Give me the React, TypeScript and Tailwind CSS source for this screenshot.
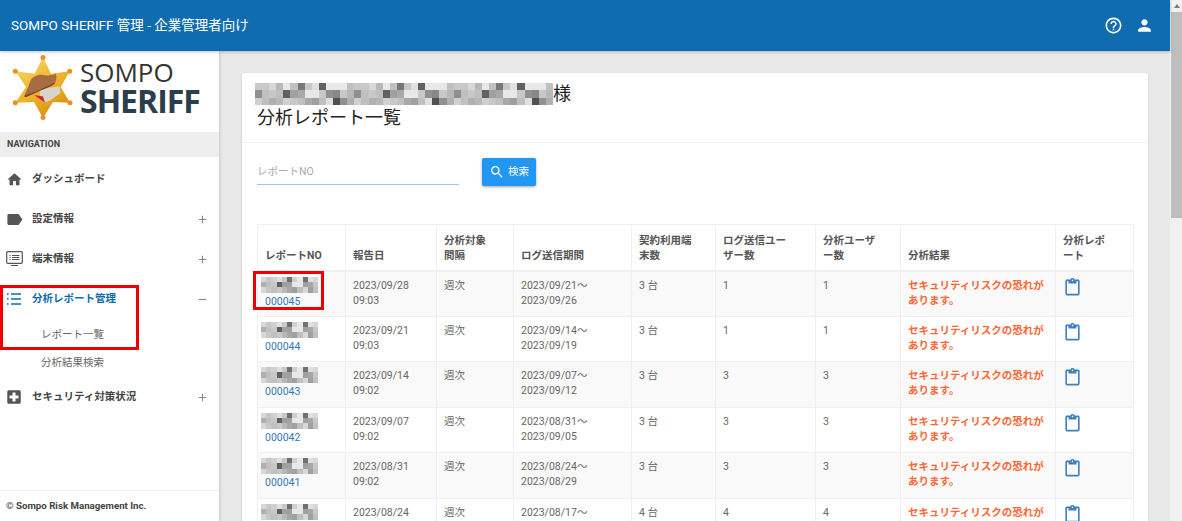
import { MdAdd, MdContentPaste, MdHelpOutline, MdHome, MdLabel, MdLocalHospital, MdPerson, MdRemove, MdSearch } from 'react-icons/md';

// grey values of the redacted name blocks, read off the picture
const nameCells = [
  ['c8', 'c8', 'd8', 'b8', 'e8', 'c0', '78', 'c8', 'e0', '60', 'e8', 'e8', 'e8', 'c0'],
  ['90', 'c0', 'c8', 'c0', '60', 'a0', 'a8', 'e8', 'e8', 'c8', '90', '88', 'c8', 'b8'],
  ['d0', 'c0', 'b0', 'b8', 'd0', 'c8', 'c0', 'a8', 'a0', 'c0', 'e0', '50', '90', 'b0'],
];
const rowCells = [
  ['d8', 'c8', 'd0', 'e0', 'c8', '70', 'd0', 'e8', '70', 'e0', 'd8'],
  ['b0', 'c0', 'c8', '60', 'a0', 'a0', 'e8', 'e8', 'a0', 'a8', 'c8'],
  ['d8', 'c8', 'c0', 'c8', 'b8', 'a8', 'a0', 'c0', 'd8', 'a0', 'c0'],
];

const Mosaic = ({ cells, repeat = 1, w, h }: { cells: string[][]; repeat?: number; w: number; h: number }) => (
  <div className="grid shrink-0 blur-[0.5px]" style={{ gridTemplateColumns: `repeat(${cells[0].length * repeat}, ${w}px)`, gridAutoRows: `${h}px` }}>
    {cells.flatMap((row, r) =>
      Array.from({ length: repeat }).flatMap((_, n) =>
        row.map((v, c) => <div key={`${r}-${n}-${c}`} style={{ background: `#${v}${v}${v}` }} />),
      ),
    )}
  </div>
);

const NavItem = ({ icon, label, toggle, active }: { icon: React.ReactNode; label: string; toggle?: 'plus' | 'minus'; active?: boolean }) => (
  <div className={`flex h-[40px] items-center pl-[1px] pr-[10px] text-[10.5px] font-bold ${active ? 'text-[#0f6cb0]' : 'text-[#444]'}`}>
    <div className="flex w-[26px] justify-center">{icon}</div>
    <span className="ml-[5px] flex-1">{label}</span>
    {toggle === 'plus' && <MdAdd className="text-[13px] text-[#888]" />}
    {toggle === 'minus' && <MdRemove className="text-[13px] text-[#888]" />}
  </div>
);

const ScreenIcon = () => (
  <svg width="17" height="16" viewBox="0 0 17 16" fill="none" stroke="#555" strokeWidth="1.2">
    <rect x="0.7" y="0.7" width="15.6" height="11.6" rx="1" />
    <path d="M3.5 4.5h1M6 4.5h7.5M3.5 6.5h1M6 6.5h7.5M3.5 8.5h1M6 8.5h7.5M5 14.5h7" />
  </svg>
);

const ListIcon = () => (
  <svg width="14" height="12" viewBox="0 0 14 12" fill="none" stroke="#0f6cb0" strokeWidth="1.4">
    <path d="M0 1h1.6M4 1h10M0 6h1.6M4 6h10M0 11h1.6M4 11h10" />
  </svg>
);

const StarLogo = () => (
  <svg width="64" height="68" viewBox="0 0 64 68">
    <defs>
      <linearGradient id="gold" x1="0" y1="0" x2="0.6" y2="1">
        <stop offset="0" stopColor="#f8dc68" />
        <stop offset="0.6" stopColor="#eeb22c" />
        <stop offset="1" stopColor="#dc9212" />
      </linearGradient>
    </defs>
    <path d="M32 2 40 18.7 58.7 16.3 49.7 32 59 47.7 42 47 32 63 23 47 4.3 47.7 15 32 4.3 16.3 23.7 18.7Z" fill="url(#gold)" />
    <g fill="#e8921a">
      <circle cx="32" cy="2.5" r="2.5" /><circle cx="58.7" cy="16.3" r="2.5" /><circle cx="59" cy="47.7" r="2.5" />
      <circle cx="32" cy="62.5" r="2.5" /><circle cx="4.3" cy="47.7" r="2.5" /><circle cx="4.3" cy="16.3" r="2.5" />
    </g>
    <path d="M29 34 48.7 31.5 49.5 38 39 45.5 33.7 47.5 29 41Z" fill="#d8d4ca" />
    <path d="M23 40 32 41.5 34 47.5Z" fill="#c2272d" />
    <path d="M19.7 25.3C22 21 27 19.7 30 19.7 33 19.5 36 21 38.7 20.3 41 20 43 19.5 45 18.7 46 23 45 26 43.7 28.7 39 32 34 33.5 30 35.3 25 37.5 20 40 15 42 13 42.5 13 41 14 39 16 35 18 30 19.7 25.3Z" fill="#a66d40" />
    <path d="M14 40.5C22 38 34 33 43.7 27.5L43.7 28.7C39 32 34 33.5 30 35.3 25 37.5 20 40 15 42 13.5 42.5 13.5 41.5 14 40.5Z" fill="#754624" />
  </svg>
);

const reports = [
  { no: '000045', date: '2023/09/28', time: '09:03', from: '2023/09/21', to: '2023/09/26', terminals: '3 台', log: '1', users: '1' },
  { no: '000044', date: '2023/09/21', time: '09:03', from: '2023/09/14', to: '2023/09/19', terminals: '3 台', log: '1', users: '1' },
  { no: '000043', date: '2023/09/14', time: '09:02', from: '2023/09/07', to: '2023/09/12', terminals: '3 台', log: '3', users: '3' },
  { no: '000042', date: '2023/09/07', time: '09:02', from: '2023/08/31', to: '2023/09/05', terminals: '3 台', log: '3', users: '3' },
  { no: '000041', date: '2023/08/31', time: '09:02', from: '2023/08/24', to: '2023/08/29', terminals: '3 台', log: '3', users: '3' },
  { no: '000040', date: '2023/08/24', time: '09:02', from: '2023/08/17', to: '2023/08/22', terminals: '4 台', log: '4', users: '4' },
];

const headers = [
  ['レポートNO'],
  ['報告日'],
  ['分析対象', '間隔'],
  ['ログ送信期間'],
  ['契約利用端', '末数'],
  ['ログ送信ユー', 'ザー数'],
  ['分析ユーザ', 'ー数'],
  ['分析結果'],
  ['分析レポ', 'ート'],
];
const colWidths = ['w-[88px]', 'w-[91px]', 'w-[77px]', 'w-[118px]', 'w-[84px]', 'w-[100px]', 'w-[85px]', 'w-[155px]', 'w-[78px]'];

export default function App() {
  return (
    <div className="relative flex h-[521px] w-[1182px] overflow-hidden bg-[#e9e9e9] font-['Roboto','Noto_Sans_CJK_JP',sans-serif] text-[10.5px] text-[#666]">
      <div className="flex min-w-0 flex-1 flex-col">
        <header className="z-10 flex h-[51px] shrink-0 items-center justify-between bg-[#0f6cb0] pl-[11px] pr-[16px] text-white shadow-[0_1px_3px_rgba(0,0,0,0.25)]">
          <div className="text-[13.5px]">SOMPO SHERIFF 管理 - 企業管理者向け</div>
          <div className="flex items-center gap-[12px]">
            <MdHelpOutline className="text-[19px]" />
            <MdPerson className="text-[19px]" />
          </div>
        </header>

        <div className="flex min-h-0 flex-1">
          <aside className="flex w-[219px] shrink-0 flex-col bg-white shadow-[1px_0_3px_rgba(0,0,0,0.15)]">
            <div className="flex h-[81px] shrink-0 items-start pl-[11px] pt-[4px]">
              <StarLogo />
              <div className="ml-[5px] mt-[4px] flex flex-col font-['Open_Sans',sans-serif] leading-none">
                <span className="text-[26px] text-[#333]">SOMPO</span>
                <span className="text-[32px] font-bold tracking-[-1px] text-[#2c3e4c]">SHERIFF</span>
              </div>
            </div>
            <div className="flex h-[25px] shrink-0 items-center bg-[#eeeeee] pl-[7px] text-[9px] font-bold text-[#444]">NAVIGATION</div>
            <div className="mt-[2px] flex-1">
              <NavItem icon={<MdHome className="text-[17px] text-[#555]" />} label="ダッシュボード" />
              <NavItem icon={<MdLabel className="text-[19px] text-[#555]" />} label="設定情報" toggle="plus" />
              <NavItem icon={<ScreenIcon />} label="端末情報" toggle="plus" />
              <NavItem icon={<ListIcon />} label="分析レポート管理" toggle="minus" active />
              <div className="flex h-[32px] items-center pl-[41px] text-[#666]">レポート一覧</div>
              <div className="flex h-[26px] items-center pb-[2px] pl-[41px] text-[#666]">分析結果検索</div>
              <NavItem icon={<MdLocalHospital className="text-[18px] text-[#555]" />} label="セキュリティ対策状況" toggle="plus" />
            </div>
            <div className="flex h-[31px] shrink-0 items-center border-t border-[#f0f0f0] pl-[6px] text-[9.7px] font-bold text-[#444]">© Sompo Risk Management Inc.</div>
          </aside>

          <main className="min-w-0 flex-1 overflow-hidden pl-[23px] pr-[22px] pt-[22px]">
            <section className="rounded-[2px] bg-white shadow-[0_1px_3px_rgba(0,0,0,0.15)]">
              <div className="h-[70px] border-b border-[#f0f0f0] pl-[13px] pt-[10px] text-[18px] leading-[24px] text-[#222]">
                <div className="flex h-[22px] items-center">
                  <Mosaic cells={nameCells} repeat={3} w={7.1} h={7.4} />
                  <span>様</span>
                </div>
                <div className="mt-[1px] pl-[2px]">分析レポート一覧</div>
              </div>

              <div className="flex items-start pl-[15px] pt-[15px]">
                <div className="flex h-[27px] w-[202px] items-center border-b border-[#90caf9] pt-[2px] text-[#aaa]">レポートNO</div>
                <button className="ml-[23px] flex h-[28px] w-[54px] items-center justify-center gap-[3px] rounded-[2px] bg-[#2196f3] text-white shadow-[0_1px_3px_rgba(0,0,0,0.35)]">
                  <MdSearch className="text-[16px]" />
                  検索
                </button>
              </div>

              <div className="pl-[15px] pt-[38px]">
                <table className="w-[876px] table-fixed border-collapse border border-[#f0f0f0] leading-[15px]">
                  <thead>
                    <tr className="h-[46px]">
                      {headers.map((lines, i) => (
                        <th key={lines[0]} className={`${colWidths[i]} border border-b-2 border-[#f0f0f0] px-[7px] pb-[7px] pt-[5px] text-left align-bottom font-bold text-[#555]`}>
                          {lines.map((line) => <div key={line}>{line}</div>)}
                        </th>
                      ))}
                    </tr>
                  </thead>
                  <tbody>
                    {reports.map((r, i) => (
                      <tr key={r.no} className={`h-[45.5px] ${i % 2 === 0 ? 'bg-[#f9f9f9]' : 'bg-white'}`}>
                        <td className="border border-[#f0f0f0] px-[3px] pt-[5px] align-top">
                          <Mosaic cells={rowCells} w={5.2} h={5.4} />
                          <div className="mt-[1px] pl-[4px] text-[#337ab7]">{r.no}</div>
                        </td>
                        <td className="border border-[#f0f0f0] px-[7px] pt-[6px] align-top">{r.date}<br />{r.time}</td>
                        <td className="border border-[#f0f0f0] px-[7px] pt-[6px] align-top">週次</td>
                        <td className="border border-[#f0f0f0] px-[7px] pt-[6px] align-top">{r.from}～<br />{r.to}</td>
                        <td className="border border-[#f0f0f0] px-[7px] pt-[6px] align-top">{r.terminals}</td>
                        <td className="border border-[#f0f0f0] px-[7px] pt-[6px] align-top">{r.log}</td>
                        <td className="border border-[#f0f0f0] px-[7px] pt-[6px] align-top">{r.users}</td>
                        <td className="border border-[#f0f0f0] px-[7px] pt-[6px] align-top font-bold text-[#ff6633]">セキュリティリスクの恐れがあります。</td>
                        <td className="border border-[#f0f0f0] px-[7px] pt-[6px] align-top"><MdContentPaste className="text-[19px] text-[#3f7fbc]" /></td>
                      </tr>
                    ))}
                  </tbody>
                </table>
              </div>
            </section>
          </main>
        </div>
      </div>

      <div className="flex w-[12px] shrink-0 flex-col bg-[#f1f1f1] pl-[1px]">
        <div className="flex h-[12px] items-center justify-center">
          <div className="h-0 w-0 border-x-[3px] border-b-[4px] border-x-transparent border-b-[#7a7a7a]" />
        </div>
        <div className="h-[206px] w-[11px] bg-[#bdbdbd]" />
      </div>

      {/* red annotation boxes drawn over the page */}
      <div className="absolute left-0 top-[285px] z-20 h-[65px] w-[139px] border-[3px] border-[#ee0000]" />
      <div className="absolute left-[253px] top-[271px] z-20 h-[39px] w-[71px] border-[3px] border-[#ee0000]" />
    </div>
  );
}
